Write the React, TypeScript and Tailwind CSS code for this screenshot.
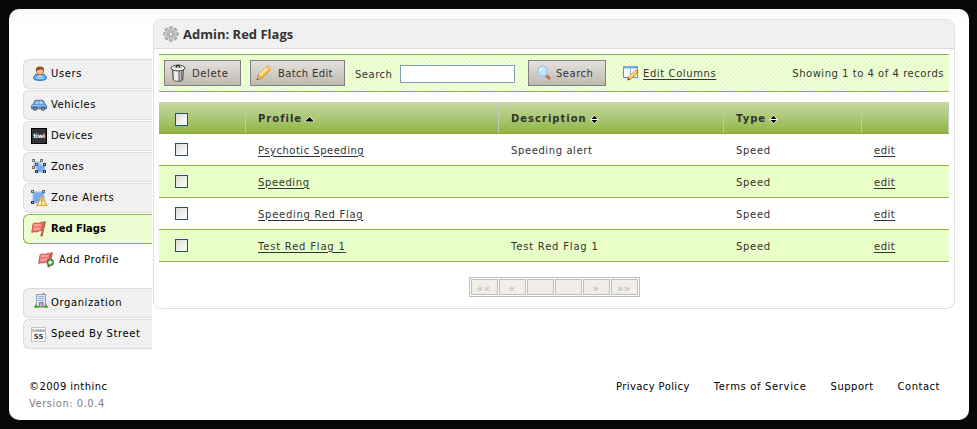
import React from "react";

type IconProps = { className?: string };

const GearIcon = ({ className }: IconProps) => (
  <svg className={className} width="16" height="16" viewBox="0 0 16 16">
    <g fill="#b4b4b4" stroke="#8a8a8a" strokeWidth=".5">
      {[0, 45, 90, 135].map((a) => (
        <rect key={a} x="6.4" y=".4" width="3.2" height="15.2" rx="1" transform={`rotate(${a} 8 8)`} />
      ))}
    </g>
    <circle cx="8" cy="8" r="5.4" fill="#cbcbcb" />
    <circle cx="8" cy="8" r="3.6" fill="none" stroke="#a4a4a4" strokeWidth=".9" />
    <circle cx="8" cy="8" r="1.9" fill="#f4f4f4" stroke="#8c8c8c" strokeWidth=".8" />
  </svg>
);

const UserIcon = ({ className }: IconProps) => (
  <svg className={className} width="16" height="16" viewBox="0 0 16 16">
    <path d="M1.500 12.500c0-2.800 2-4.500 4.500-4.500h4c2.500 0 4.500 1.700 4.500 4.500-.5 2.500-12.500 2.500-13 0z" fill="#62a9f5" stroke="#2f6cc4" />
    <path d="M4 13h8l-.5-3h-7z" fill="#8ec6fc" />
    <circle cx="8" cy="5" r="3.700" fill="#f5bf90" stroke="#a4602a" strokeWidth=".8" />
    <path d="M3.800 5C3.500 1.800 5.500.5 8 .5s4.600 1.300 4.200 4.500c-1-1-2-1.300-3.200-1.500C7.500 4 5 3.600 3.800 5z" fill="#96521f" />
    <path d="M6.300 9h3.400L8 10.600z" fill="#f7d3b4" />
  </svg>
);

const CarIcon = ({ className }: IconProps) => (
  <svg className={className} width="16" height="16" viewBox="0 0 16 16">
    <path d="M.6 8.500 2.600 7l1.600-3.700h7.800L14 7l1.500 1.500v3.300H.6z" fill="#5f95db" stroke="#35609f" strokeWidth=".8" />
    <path d="M4 6.800 5.200 4.300h2.300v2.500zM8.500 4.300h2.700l1.300 2.500h-4z" fill="#b9d7f6" />
    <path d="M1.500 8.500h13" stroke="#94bff5" />
    <circle cx="4" cy="11.800" r="2" fill="#444" />
    <circle cx="12" cy="11.800" r="2" fill="#444" />
    <circle cx="4" cy="11.800" r=".8" fill="#ddd" />
    <circle cx="12" cy="11.800" r=".8" fill="#ddd" />
  </svg>
);

const TiwiIcon = ({ className }: IconProps) => (
  <span className={`flex h-4 w-4 items-center justify-center border border-black bg-[#333] text-[6px] leading-none font-bold tracking-[-0.2px] text-white ${className ?? ""}`}>
    tiwi
  </span>
);

const Handle = ({ x, y, c = "#333" }: { x: number; y: number; c?: string }) => (
  <rect x={x + 0.5} y={y + 0.5} width="2" height="2" fill="#ddd" stroke={c} />
);

const ZonesIcon = ({ className }: IconProps) => (
  <svg className={className} width="16" height="16" viewBox="0 0 16 16">
    <path d="M2.500 2.500h8v4h3v7h-8v-4h-3z" fill="#a3c6f7" />
    <path d="M6 6.500h8l-1 6.500H6z" fill="#78a9ef" />
    <Handle x={1} y={0} c="#777" />
    <Handle x={9} y={0} c="#777" />
    <Handle x={1} y={7} c="#777" />
    <Handle x={4} y={4} c="#555" />
    <Handle x={12} y={4} />
    <Handle x={4} y={11} />
    <Handle x={12} y={11} />
  </svg>
);

const ZoneAlertIcon = ({ className }: IconProps) => (
  <svg className={className} width="17" height="16" viewBox="0 0 17 16">
    <path d="M2 2h11v11H2z" fill="#7aaaf0" stroke="#9dc1f5" />
    <Handle x={0} y={0} c="#666" />
    <Handle x={11} y={0} c="#666" />
    <Handle x={0} y={11} />
    <path d="m10.800 6.500 5 8.800H5.800z" fill="#fff2b0" stroke="#e3aa3a" strokeWidth="1.300" strokeLinejoin="round" />
    <path d="M10.800 9.200v3m0 .8v1.300" stroke="#9b6b16" strokeWidth="1.100" />
  </svg>
);

const FlagIcon = ({ className, add }: IconProps & { add?: boolean }) => (
  <svg className={className} width="16" height="16" viewBox="0 0 16 16">
    <path d="M13.700 1.200 10.600 14.500" stroke="#98602b" strokeWidth="2.200" strokeLinecap="round" />
    <path d="M13.500 1.600 10.800 13" stroke="#d09a58" strokeWidth=".8" />
    <path d="M2.200 2.800c2-2 4 .6 6.600-.9 1.300-.8 2.700-.8 3.700-.3l-1.700 8c-1.500-.5-2.400.2-3.700.9-2 1-4-.6-6.300.9z" fill="#f67f78" stroke="#dc423c" />
    <path d="M3 4.200c2-1 4 .5 6.500-.7M2.500 8.200c2-1 4 .5 6.500-.7" stroke="#fcb6ae" strokeWidth="1.300" fill="none" />
    {add && (
      <>
        <circle cx="12.300" cy="10.500" r="3.300" fill="#4d9e40" stroke="#286b26" strokeWidth=".8" />
        <path d="M12.300 8.500v4m-2-2h4" stroke="#fff" strokeWidth="1.300" />
      </>
    )}
  </svg>
);

const BuildingIcon = ({ className }: IconProps) => (
  <svg className={className} width="14" height="16" viewBox="0 0 14 16">
    <path d="M9.500 2V0" stroke="#a4622f" strokeWidth="1.200" />
    <path d="M2.500 1.500h9v12h-9z" fill="#e3e8f0" stroke="#9a9ea6" />
    <path d="M4 3.500h6M4 5.500h6M4 7.500h6" stroke="#83b4f7" />
    <path d="M5.500 9.500h3.500v4.500H5.500z" fill="#b9b9b9" stroke="#777" />
    <path d="M0 14.500 2 10.500l2.500 4zM9.500 14.500 12 10.500l2 4z" fill="#58ad48" />
    <path d="M0 14h5m4.500 0H14" stroke="#3c8a33" />
  </svg>
);

const SpeedSignIcon = ({ className }: IconProps) => (
  <span className={`flex h-[15px] w-[15px] flex-col items-center border border-[#c3c3c3] bg-white text-[#333] ${className ?? ""}`}>
    <span className="mt-px h-[4px] text-[3.500px] leading-[4px] font-bold tracking-[0px] text-[#777]">SPEED</span>
    <span className="text-[7px] leading-[8px] font-bold tracking-[0px]">55</span>
  </span>
);

const TrashIcon = ({ className }: IconProps) => (
  <svg className={className} width="16" height="18" viewBox="0 0 16 18">
    <path d="M2.500 5h11l-.8 11c-1.500 1.600-7.900 1.600-9.400 0z" fill="#c9c9c9" stroke="#444" />
    <path d="M5 6.500v10M7 6.500v10.300" stroke="#fff" strokeWidth="1.300" />
    <path d="M9.200 6v11M11.500 6v10.500" stroke="#777" strokeWidth="1.200" />
    <ellipse cx="8" cy="4" rx="7" ry="2.900" fill="#f4f4f4" stroke="#444" />
    <path d="M6.200 3.800c-.5-3.500 4-3.500 3.600 0" fill="#999" stroke="#222" strokeWidth="1.100" />
    <path d="M4 3.500h2m4 0h2" stroke="#999" />
  </svg>
);

const PencilIcon = ({ className }: IconProps) => (
  <svg className={className} width="16" height="16" viewBox="0 0 16 16">
    <path d="M1 14.500 2.500 10 11 1.500c1-1 4.500 1.800 3.300 3.300L5.500 13.300z" fill="#f9c84c" stroke="#c9842a" />
    <path d="M3.800 10.200 11 3" stroke="#fff0a8" strokeWidth="1.800" />
    <path d="M1 14.700 2.400 10.800l2.600 2.500z" fill="#f0c69a" stroke="#ab7140" strokeWidth=".6" />
    <path d="m11 1.600 1-.9c1.500-.5 3.600 1.500 2.800 3.200l-.8.9z" fill="#f3b795" />
    <path d="m.8 15 .6-1.600 1 1z" fill="#444" />
  </svg>
);

const MagnifierIcon = ({ className }: IconProps) => (
  <svg className={className} width="16" height="16" viewBox="0 0 16 16">
    <path d="m10 10 3 3" stroke="#a9643a" strokeWidth="3" strokeLinecap="round" />
    <path d="m10.700 10 2.500 2.600" stroke="#e3b088" strokeWidth="1" />
    <circle cx="6.600" cy="6.300" r="5" fill="#c2e2fc" stroke="#a3c3ee" strokeWidth="1.500" />
    <path d="M3.800 6c.2-2 1.500-2.800 3-2.800" stroke="#f3fbff" strokeWidth="1.500" fill="none" />
  </svg>
);

const ColumnsIcon = ({ className }: IconProps) => (
  <svg className={className} width="16" height="16" viewBox="0 0 16 16">
    <path d="M.5 1.500h14v11H.5z" fill="#fff" stroke="#5b8ed4" />
    <path d="M.5 1h14v2.500H.5z" fill="#76a8e8" />
    <path d="M7.500 3.500v9" stroke="#7eaae2" />
    <path d="M4.500 15 5.500 12l6.700-6.700c1-.8 3.300 1.200 2.500 2.400L7.700 14.300z" fill="#f9cb58" stroke="#bd7c24" strokeWidth=".9" />
    <path d="m6.500 12 6-6" stroke="#fff0aa" />
    <path d="m4.400 15.300.8-2.500 1.900 1.700z" fill="#8f4e20" />
  </svg>
);

const SortIcon = ({ className, asc }: IconProps & { asc?: boolean }) => (
  <svg className={className} width="9" height="9" viewBox="0 0 9 9">
    {asc ? (
      <path d="M4.500 2 8 5.500v1H1v-1z" fill="#000" stroke="#fff" strokeWidth="1.200" paintOrder="stroke" />
    ) : (
      <path d="M4.500.8 7.500 4h-6zM1.500 5h6L4.500 8.200z" fill="#000" stroke="#fff" strokeWidth="1.200" paintOrder="stroke" />
    )}
  </svg>
);

const stripesGray =
  "bg-[repeating-linear-gradient(45deg,#ededed_0,#ededed_1.500px,#fbfbfb_2.100px,#fbfbfb_2.828px)]";
const stripesGreen =
  "bg-[repeating-linear-gradient(135deg,#e8fec8_0,#e8fec8_2.200px,#fbfff4_2.700px,#fbfff4_3.535px)]";
const stripesActive =
  "bg-[repeating-linear-gradient(45deg,#e9fecb_0,#e9fecb_1.500px,#f4ffe4_2.100px,#f4ffe4_2.828px)]";

type NavItemProps = { icon: React.ReactNode; label: string; active?: boolean; tracking?: string };

const NavItem = ({ icon, label, active, tracking = "tracking-[0.5px]" }: NavItemProps) => (
  <div
    className={`mb-px flex h-[30px] items-center rounded-l-[6px] border border-r-0 pl-[7px] ${
      active ? `border-[#8cb33b] font-bold ${stripesActive}` : `border-[#dcdcdc] ${stripesGray}`
    }`}
  >
    <span className="flex w-5 shrink-0 items-center">{icon}</span>
    <span className={`whitespace-nowrap ${tracking}`}>{label}</span>
  </div>
);

const Checkbox = () => (
  <span className="block h-[13px] w-[13px] border border-[#1c5180] bg-linear-to-br from-[#dcdcd7] to-white" />
);

const ToolButton = ({ icon, label, className }: { icon: React.ReactNode; label: string; className: string }) => (
  <button
    className={`flex h-[26px] items-center border border-[#808080] bg-linear-to-b from-[#e4e1de] to-[#bfb9b0] text-[#333] ${className}`}
  >
    {icon}
    <span className="pt-px whitespace-nowrap">{label}</span>
  </button>
);

const rows = [
  { name: "Psychotic Speeding", description: "Speeding alert", type: "Speed", tracking: "tracking-[0.500px]" },
  { name: "Speeding", description: "", type: "Speed", tracking: "tracking-[0.600px]" },
  { name: "Speeding Red Flag", description: "", type: "Speed", tracking: "tracking-[0.720px]" },
  { name: "Test Red Flag 1", description: "Test Red Flag 1", type: "Speed", tracking: "tracking-[0.800px]" },
];

const grid = "grid grid-cols-[87px_253px_225px_138px_87px]";
const headCell = "flex items-center border-r border-[#c4c4c4] pt-[3px] pl-3";

export default function App() {
  return (
    <div className="h-[429px] w-[977px] bg-[#080808] pt-[9px] pl-[9px] font-['DejaVu_Sans',Verdana,sans-serif] text-[10px] leading-[14px] tracking-[0.5px] text-black">
      <div className="flex h-[411px] w-[960px] flex-col rounded-[10px] bg-[linear-gradient(#f9f9f9,#fff_14px)]">
        <div className="flex h-[340px]">
          <nav className="ml-[14px] w-[129px] pt-[50px]">
            <NavItem icon={<UserIcon className="ml-px" />} label="Users" tracking="tracking-[0.600px]" />
            <NavItem icon={<CarIcon />} label="Vehicles" />
            <NavItem icon={<TiwiIcon />} label="Devices" tracking="tracking-[0.350px]" />
            <NavItem icon={<ZonesIcon />} label="Zones" />
            <NavItem icon={<ZoneAlertIcon />} label="Zone Alerts" />
            <NavItem icon={<FlagIcon />} label="Red Flags" active tracking="tracking-[-0.050px]" />
            <div className="mb-[13px] flex h-[30px] items-center pl-[15px]">
              <FlagIcon add />
              <span className="ml-[5px] whitespace-nowrap tracking-[0.600px]">Add Profile</span>
            </div>
            <NavItem icon={<BuildingIcon className="mb-1 ml-[3px]" />} label="Organization" tracking="tracking-[0.600px]" />
            <NavItem icon={<SpeedSignIcon />} label="Speed By Street" tracking="tracking-[0.570px]" />
          </nav>

          <main className="mt-[10px] ml-px h-[290px] w-[802px] overflow-hidden rounded-[8px] border border-[#dfdfdf] bg-white">
            <header className={`flex h-[29px] items-center border-b border-[#dcdcdc] pl-[9px] ${stripesGray}`}>
              <GearIcon />
              <h1 className="ml-1 font-['Open_Sans',sans-serif] text-[13px] font-bold tracking-[0px] text-[#333]">
                Admin: Red Flags
              </h1>
            </header>

            <div className={`mx-[5px] mt-[5px] flex h-[38px] items-center border-y border-[#8cb33b] pl-[5px] text-[#333] ${stripesGreen}`}>
              <ToolButton icon={<TrashIcon className="mr-[6px]" />} label="Delete" className="w-[77px] pl-[5px] tracking-[0.600px]" />
              <ToolButton icon={<PencilIcon className="mr-[6px]" />} label="Batch Edit" className="ml-[9px] w-[95px] pl-[5px] tracking-[0.350px]" />
              <label className="ml-[10px] w-[45px] pt-[3px]">Search</label>
              <input className="mt-[2px] h-[18px] w-[115px] border border-[#7f9db9] bg-white" />
              <ToolButton icon={<MagnifierIcon className="mr-[4px]" />} label="Search" className="ml-[13px] w-[78px] pl-[7px]" />
              <ColumnsIcon className="ml-[17px]" />
              <a className="ml-1 pt-px whitespace-nowrap tracking-[0.600px] underline underline-offset-2">Edit Columns</a>
              <span className="mr-[5px] ml-auto pt-px whitespace-nowrap tracking-[0.530px]">Showing 1 to 4 of 4 records</span>
            </div>

            <section className="mx-[5px] mt-[10px] text-[#333]">
              <div className={`${grid} h-8 border-b border-[#8aab3c] bg-linear-to-b from-[#c7daa3] to-[#90b541] font-bold tracking-[1px]`}>
                <div className="flex items-center border-r border-[#c4c4c4] pt-[3px] pl-4"><Checkbox /></div>
                <div className={headCell}>
                  Profile <SortIcon asc className="ml-[3px]" />
                </div>
                <div className={headCell}>
                  Description <SortIcon className="ml-[3px]" />
                </div>
                <div className={headCell}>
                  Type <SortIcon className="ml-[3px]" />
                </div>
                <div className="border-r border-[#c4c4c4]" />
              </div>
              {rows.map((row, i) => (
                <div
                  key={row.name}
                  className={`${grid} h-8 items-center border-b border-[#8cb33b] ${i % 2 ? "bg-[#e8ffc8]" : "bg-white"}`}
                >
                  <div className="pl-4"><Checkbox /></div>
                  <a className={`pt-[2px] pl-3 underline underline-offset-2 ${row.tracking}`}>{row.name}</a>
                  <span className={`pt-[2px] pl-3 ${row.description === row.name ? row.tracking : "tracking-[0.600px]"}`}>
                    {row.description}
                  </span>
                  <span className="pt-[2px] pl-3 tracking-[0.700px]">{row.type}</span>
                  <a className="pt-[2px] pl-3 underline underline-offset-2">edit</a>
                </div>
              ))}
            </section>

            <div className="mt-[15px] ml-[315px] flex h-5 w-[171px] gap-px border border-[#c0bfb7] bg-white p-px">
              {["««", "«", "", "", "»", "»»"].map((label, i) => (
                <span key={i} className="flex h-4 w-[27px] items-center justify-center border border-[#c0bfb7] bg-[#f1eeea] pt-[3px] pr-[2px] text-[11px] tracking-[0px] text-[#b9b6ad]">
                  {label}
                </span>
              ))}
            </div>
          </main>
        </div>

        <footer className="flex justify-between pt-[31px] pr-[29px] pl-5">
          <div>
            <p className="tracking-[0.450px]">©2009 inthinc</p>
            <p className="mt-[3px] text-[#808080]">Version: 0.0.4</p>
          </div>
          <div className="flex">
            <a className="mr-6 tracking-[0.400px]">Privacy Policy</a>
            <a className="mr-6 tracking-[0.650px]">Terms of Service</a>
            <a className="mr-6">Support</a>
            <a>Contact</a>
          </div>
        </footer>
      </div>
    </div>
  );
}
